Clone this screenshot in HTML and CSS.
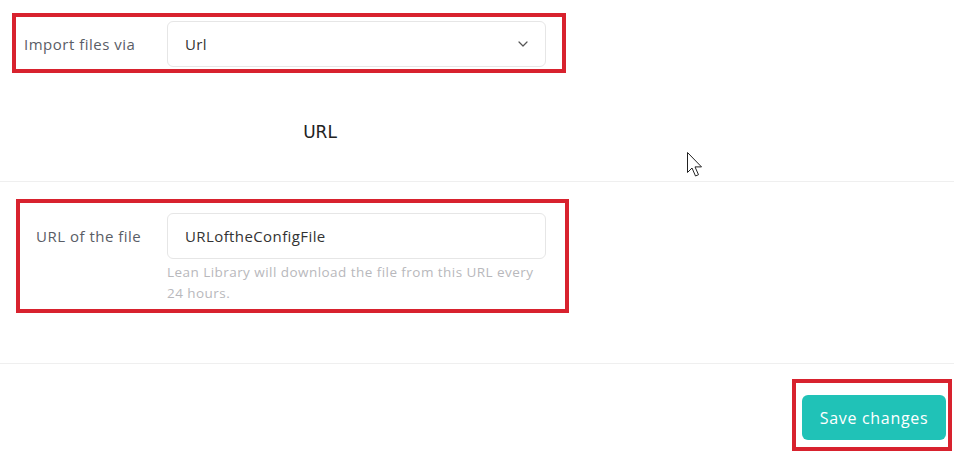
FILE: index.html
```html
<!doctype html>
<html>
	<head>
		<title>Import settings</title>
		<link rel="stylesheet" href="styles.css">
	</head>

	<body>
		<div class="page">
			<div class="marked marked-import">
				<div class="field-row">
					<label class="field-label" for="importVia">Import files via</label>
					<div class="select-box" id="importVia">
						<span>Url</span>
						<svg class="chevron" width="10" height="6" viewBox="0 0 10 6">
							<path d="M1 1l4 4 4-4" fill="none" stroke="#555" stroke-width="1.2" stroke-linecap="round" stroke-linejoin="round"/>
						</svg>
					</div>
				</div>
			</div>

			<h2 class="section-title">URL</h2>

			<div class="divider"></div>

			<div class="marked marked-url">
				<div class="field-row">
					<label class="field-label" for="fileUrl">URL of the file</label>
					<div class="field-control">
						<div class="text-box" id="fileUrl">URLoftheConfigFile</div>
						<p class="help">Lean Library will download the file from this URL every 24 hours.</p>
					</div>
				</div>
			</div>

			<div class="divider divider-bottom"></div>

			<div class="actions">
				<div class="marked marked-save">
					<button class="save">Save changes</button>
				</div>
			</div>

			<svg class="cursor" width="20" height="28" viewBox="0 0 20 28">
				<path d="M1.5 1.5v20l4.5-4.5 3.5 8 3-1.3-3.5-7.8h6.5z" fill="#fff" stroke="#222" stroke-width="1" stroke-linejoin="round"/>
			</svg>
		</div>
	</body>
</html>
```

FILE: styles.css
```css
:root {
	--red: #d8222e;
	--teal: #20c2b7;
	--gray-100: #efefef;
	--gray-200: #e6e6e6;
	--gray-400: #b8b8bc;
	--gray-600: #5a5d66;
	--gray-800: #333;
}

body {
	margin: 0;
	font-family: "Open Sans", "Noto Sans", sans-serif;
	background-color: #ffffff;
	color: var(--gray-800);
}

.page {
	position: relative;
	width: 954px;
	height: 455px;
	padding-top: 13px;
	box-sizing: border-box;
}

.marked {
	border: 4px solid var(--red);
	box-sizing: border-box;
}

.marked-import {
	margin-left: 12px;
	width: 554px;
	padding: 4px 16px 2px 8px;
}

.marked-url {
	margin: 17px 0 0 16px;
	width: 553px;
	padding: 10px 19px 5px 16px;
}

.field-row {
	display: flex;
	align-items: flex-start;
}

.field-label {
	font-size: 15px;
	letter-spacing: 0.5px;
	color: var(--gray-600);
	line-height: 46px;
	flex-shrink: 0;
}

.marked-import .field-label {
	width: 143px;
}

.marked-url .field-label {
	width: 131px;
}

.field-control {
	flex: 1;
}

.select-box,
.text-box {
	height: 46px;
	border: 1px solid var(--gray-200);
	border-radius: 6px;
	box-sizing: border-box;
	display: flex;
	align-items: center;
	padding: 0 17px;
	font-size: 15px;
	letter-spacing: 0.4px;
	color: var(--gray-800);
}

.select-box {
	flex: 1;
	justify-content: space-between;
}

.help {
	margin: 3px 0 0 0;
	font-size: 13.5px;
	letter-spacing: 0.45px;
	line-height: 21px;
	color: var(--gray-400);
	max-width: 375px;
}

.section-title {
	width: 640px;
	margin: 48px 0 0 0;
	text-align: center;
	font-family: "DejaVu Sans", sans-serif;
	font-size: 17px;
	font-weight: 400;
	line-height: 22px;
	color: #222;
}

.divider {
	height: 1px;
	background-color: var(--gray-100);
	margin-top: 38px;
}

.divider-bottom {
	margin-top: 50px;
}

.actions {
	display: flex;
	justify-content: flex-end;
	padding: 15px 2px 0 0;
}

.marked-save {
	width: 160px;
	padding: 12px 2px 7px 6px;
}

.save {
	width: 144px;
	height: 45px;
	border: none;
	border-radius: 6px;
	background-color: var(--teal);
	color: #ffffff;
	font-family: inherit;
	font-size: 16px;
	letter-spacing: 0.7px;
	cursor: pointer;
}

.cursor {
	position: absolute;
	left: 686px;
	top: 151px;
}
```
